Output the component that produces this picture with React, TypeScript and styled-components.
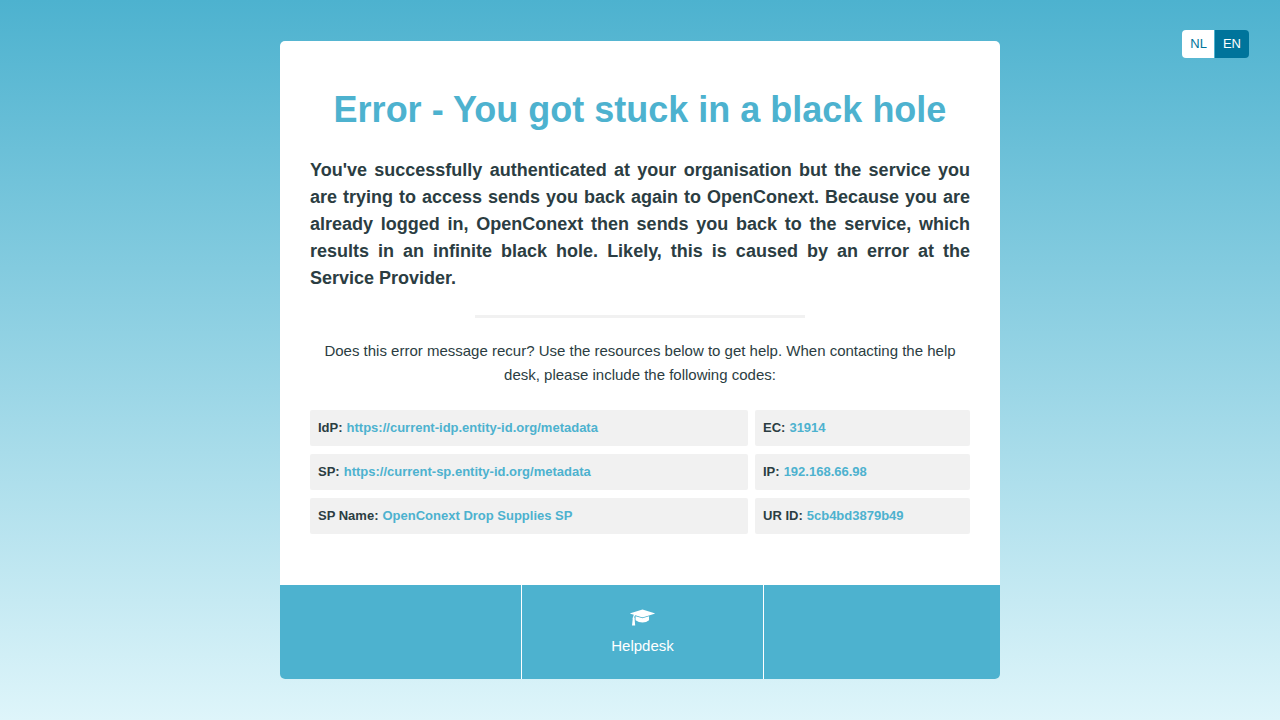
import React from "react";
import styled, { createGlobalStyle } from "styled-components";

const colors = {
  primary: "#4db2cf",
  dark: "#00749b",
  text: "#2b3d42",
  panel: "#f1f1f1",
};

const GlobalStyle = createGlobalStyle`
  *, *::before, *::after { box-sizing: border-box; }
  body {
    margin: 0;
    color: ${colors.text};
    font-family: "Liberation Sans", Arial, sans-serif;
    font-size: 15px;
    line-height: 24px;
  }
`;

const Page = styled.div`
  position: relative;
  min-height: 100vh;
  padding: 41px 16px;
  background: linear-gradient(to bottom, ${colors.primary} 0%, #def5fa 100%);
`;

const LanguageNav = styled.nav`
  position: absolute;
  top: 30px;
  right: 31px;
  display: flex;
  border-radius: 4px;
  overflow: hidden;
`;

const LanguageLink = styled.a<{ $active?: boolean }>`
  padding: 0 8px;
  font-size: 13px;
  line-height: 28px;
  text-decoration: none;
  color: ${(p) => (p.$active ? "#ffffff" : colors.dark)};
  background: ${(p) => (p.$active ? colors.dark : "#ffffff")};

  &:not(:last-child) {
    padding-right: 7px;
    border-right: 1px solid ${colors.primary};
  }
`;

const Card = styled.div`
  max-width: 720px;
  margin: 0 auto;
  border-radius: 5px;
  background: #ffffff;
  overflow: hidden;
`;

const Content = styled.main`
  padding: 42px 30px 51px;
`;

const Title = styled.h1`
  margin: 0 0 20px;
  color: ${colors.primary};
  font-size: 36px;
  line-height: 54px;
  text-align: center;
`;

const Lead = styled.p`
  margin: 0;
  font-size: 18px;
  font-weight: bold;
  line-height: 27px;
  text-align: justify;
`;

const Divider = styled.hr`
  width: 50%;
  height: 3px;
  margin: 23px auto 21px;
  border: 0;
  background: ${colors.panel};
`;

const HelpText = styled.p`
  margin: 0 0 23px;
  text-align: center;
`;

const Codes = styled.dl`
  display: grid;
  grid-template-columns: minmax(0, 1fr) 215px;
  gap: 8px 7px;
  margin: 0;
`;

const Code = styled.div`
  display: flex;
  gap: 4px;
  padding: 0 8px;
  border-radius: 2px;
  background: ${colors.panel};
  font-size: 13px;
  font-weight: bold;
  line-height: 36px;
`;

const CodeLabel = styled.dt``;

const CodeValue = styled.dd`
  margin: 0;
  color: ${colors.primary};
`;

const Footer = styled.footer`
  display: grid;
  grid-template-columns: 121fr 121fr 118fr;
  min-height: 94px;
  background: ${colors.primary};
`;

const FooterCell = styled.div`
  display: flex;

  &:not(:last-child) {
    border-right: 1px solid #ffffff;
  }
`;

const HelpLink = styled.a`
  flex: 1;
  display: flex;
  flex-direction: column;
  align-items: center;
  gap: 8px;
  padding: 24px 0 20px;
  color: #ffffff;
  text-decoration: none;
`;

const codes = [
  ["IdP", "https://current-idp.entity-id.org/metadata"],
  ["EC", "31914"],
  ["SP", "https://current-sp.entity-id.org/metadata"],
  ["IP", "192.168.66.98"],
  ["SP Name", "OpenConext Drop Supplies SP"],
  ["UR ID", "5cb4bd3879b49"],
];

const CapIcon = () => (
  <svg width="25" height="17" viewBox="0 0 26 17" fill="#ffffff" aria-hidden="true">
    <path d="M13 0.2 L25.6 4 Q26 4.3 25.6 4.6 L13.7 8.2 Q13 8.4 12.3 8.2 L5.6 6.2 Q4.6 6.8 4.4 8.4 Q5.3 9.1 4.8 10.1 L5.4 16.8 H2.1 L2.8 10.1 Q2.2 9 3.2 8.3 Q3.3 6.8 4 5.7 L0.4 4.6 Q0 4.3 0.4 4 Z" />
    <path d="M5.8 7.2 L12.2 9.1 Q13 9.3 13.8 9.1 L19.8 7.3 V11.4 Q17 13.8 13 13.8 Q9 13.8 5.8 11.4 Z" />
  </svg>
);

export default function App() {
  return (
    <>
      <GlobalStyle />
      <Page>
        <LanguageNav aria-label="Language">
          <LanguageLink href="#nl" lang="nl">NL</LanguageLink>
          <LanguageLink href="#en" lang="en" $active aria-current="true">EN</LanguageLink>
        </LanguageNav>
        <Card>
          <Content>
            <Title>Error - You got stuck in a black hole</Title>
            <Lead>
              You've successfully authenticated at your organisation but the service you are trying to
              access sends you back again to OpenConext. Because you are already logged in, OpenConext
              then sends you back to the service, which results in an infinite black hole. Likely, this
              is caused by an error at the Service Provider.
            </Lead>
            <Divider />
            <HelpText>
              Does this error message recur? Use the resources below to get help. When contacting the
              help desk, please include the following codes:
            </HelpText>
            <Codes>
              {codes.map(([label, value]) => (
                <Code key={label}>
                  <CodeLabel>{label}:</CodeLabel>
                  <CodeValue>{value}</CodeValue>
                </Code>
              ))}
            </Codes>
          </Content>
          <Footer>
            <FooterCell />
            <FooterCell>
              <HelpLink href="#helpdesk">
                <CapIcon />
                Helpdesk
              </HelpLink>
            </FooterCell>
            <FooterCell />
          </Footer>
        </Card>
      </Page>
    </>
  );
}
